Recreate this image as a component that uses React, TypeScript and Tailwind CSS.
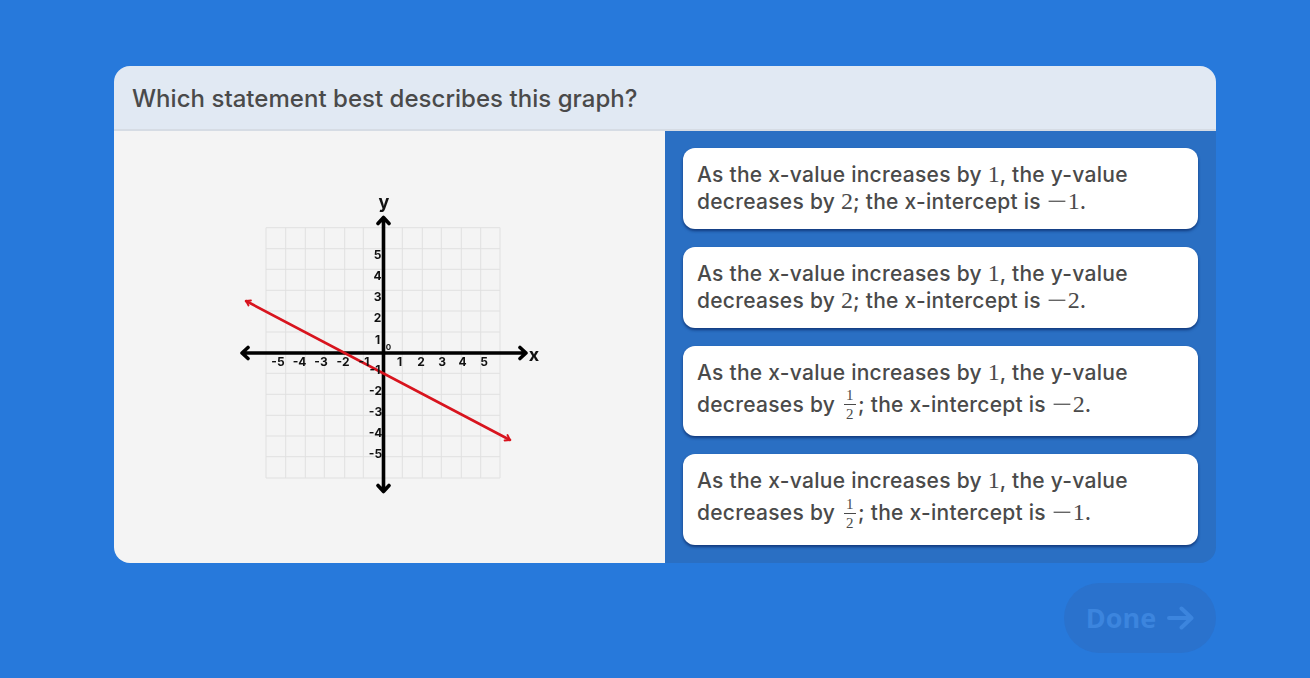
import React from "react";

const ui = "font-['Inter','Liberation_Sans',sans-serif]";
const math = "font-['Liberation_Serif',serif] font-normal text-[24px] text-[#4a4a4a] tracking-normal";

function M({ children }: { children: React.ReactNode }) {
  return <span className={math}>{children}</span>;
}

function Minus() {
  return <span className={`${math} inline-block w-[21px] origin-left scale-x-[1.5]`}>{"\u2212"}</span>;
}

function Frac() {
  return (
    <span className="inline-flex flex-col items-center align-middle ml-[3px] mr-[2px] font-['Liberation_Serif',serif] font-normal text-[15px] leading-[18px] text-[#4a4a4a] w-[12px] relative -top-[1px]">
      <span>1</span>
      <span className="w-full h-px bg-[#4a4a4a]" />
      <span>2</span>
    </span>
  );
}

function Option({ slope, intercept, frac }: { slope?: string; intercept: string; frac?: boolean }) {
  return (
    <button className={`w-full text-left bg-white rounded-xl px-[14px] pt-[13px] ${frac ? "h-[91px]" : "h-[81px]"} shadow-[0_2px_3px_rgba(10,40,100,0.75)] text-[21px] font-medium tracking-[0.27px] text-[#4a4a4a] ${ui} flex flex-col justify-start`}>
      <div className="h-[27px] leading-[27px] whitespace-nowrap">As the x-value increases by <M>1</M>, the y-value</div>
      <div className={`whitespace-nowrap ${frac ? "h-[37px] leading-[37px]" : "h-[27px] leading-[27px]"}`}>
        decreases by {frac ? <Frac /> : <M>{slope}</M>}; the x-intercept is <Minus /><M>{intercept}</M>.
      </div>
    </button>
  );
}

const xs = [266, 285.7, 305.3, 324.3, 344.7, 363.3, 382.7, 402.3, 422.3, 441.3, 461.3, 480.7, 500];
const ys = [227.7, 248.7, 269.3, 290.3, 311, 332, 353, 373.3, 394.3, 415.3, 436, 456.7, 478];
const xLabels: [string, number][] = [["-5", 278], ["-4", 299.5], ["-3", 321], ["-2", 343], ["-1", 364], ["1", 399.5], ["2", 421], ["3", 442], ["4", 462.5], ["5", 484]];
const yLabels: [string, number, number][] = [["5", 377.5, 258.5], ["4", 377.5, 279.5], ["3", 377.5, 300.5], ["2", 377.5, 322], ["1", 377.5, 343.5], ["-1", 375, 373.5], ["-2", 375.5, 394.5], ["-3", 375.5, 415.5], ["-4", 375.5, 437], ["-5", 375.5, 458]];

function Graph() {
  return (
    <svg viewBox="229 190 321 314" className="w-[321px] h-[314px] blur-[0.35px]">
      {xs.map((x) => <line key={x} x1={x} x2={x} y1={227.7} y2={478} stroke="#e0e0e0" strokeWidth="1" />)}
      {ys.map((y) => <line key={y} y1={y} y2={y} x1={266} x2={500} stroke="#e0e0e0" strokeWidth="1" />)}
      <g stroke="#000" strokeWidth="3.6" fill="none" strokeLinecap="round" strokeLinejoin="round">
        <path d="M243 353H526M248 347.5L242 353L248 358.5M520 347.5L526 353L520 358.5" />
        <path d="M383.5 218V491M378 223.5L383.5 217.5L389 223.5M378 485.5L383.5 491.5L389 485.5" />
      </g>
      <g stroke="#d8141e" fill="none" strokeLinecap="round" strokeLinejoin="round">
        <path d="M246 301L510 440" strokeWidth="2.6" />
        <path d="M246 301L251 300.5M246 301L248.5 305.5M510 440L504.5 440.5M510 440L507.5 435" strokeWidth="1.8" />
      </g>
      <g fontFamily="Inter, sans-serif" fontWeight="700" fontSize="12" fill="#111" textAnchor="middle">
        {xLabels.map(([t, x]) => <text key={t} x={x} y={366}>{t}</text>)}
        {yLabels.map(([t, x, y]) => <text key={t} x={x} y={y}>{t}</text>)}
        <text x={388.5} y={350} fontSize="8">0</text>
        <text x={534} y={361} fontSize="18">x</text>
        <text x={384} y={208} fontSize="18">y</text>
      </g>
    </svg>
  );
}

export default function App() {
  return (
    <div className="w-full h-[678px] bg-[#2779db] flex flex-col pt-[66px] pl-[114px] pr-[94px] overflow-hidden">
      <div className="w-[1102px] h-[497px] flex flex-col rounded-[16px] overflow-hidden">
        <div className={`h-[65px] shrink-0 bg-[#e1e9f3] border-b-2 border-[#d6dce4] flex items-center pl-[18px] pt-[2px] text-[24px] font-medium tracking-[0.03px] text-[#4a4a4a] ${ui}`}>
          Which statement best describes this graph?
        </div>
        <div className="flex flex-1 min-h-0">
          <div className="w-[551px] bg-[#f4f4f4] flex items-center justify-center">
            <Graph />
          </div>
          <div className="flex-1 bg-[#2a6fc3] p-[18px] pt-[17px] flex flex-col gap-[18px]">
            <Option slope="2" intercept="1" />
            <Option slope="2" intercept="2" />
            <Option frac intercept="2" />
            <Option frac intercept="1" />
          </div>
        </div>
      </div>
      <div className="w-[1102px] flex justify-end mt-[20px]">
        <div className="w-[152px] h-[70px] rounded-[35px] bg-[#2a72cd] flex items-center justify-center gap-[11px] text-[#3c85de] font-['Open_Sans',sans-serif] font-bold text-[27px]">
          <span>Done</span>
          <svg width="27" height="24" viewBox="0 0 27 24" fill="none" stroke="currentColor" strokeWidth="4" strokeLinecap="round" strokeLinejoin="round" aria-hidden="true">
            <path d="M2 12H24M14.5 2.5L24.5 12L14.5 21.5" />
          </svg>
        </div>
      </div>
    </div>
  );
}
